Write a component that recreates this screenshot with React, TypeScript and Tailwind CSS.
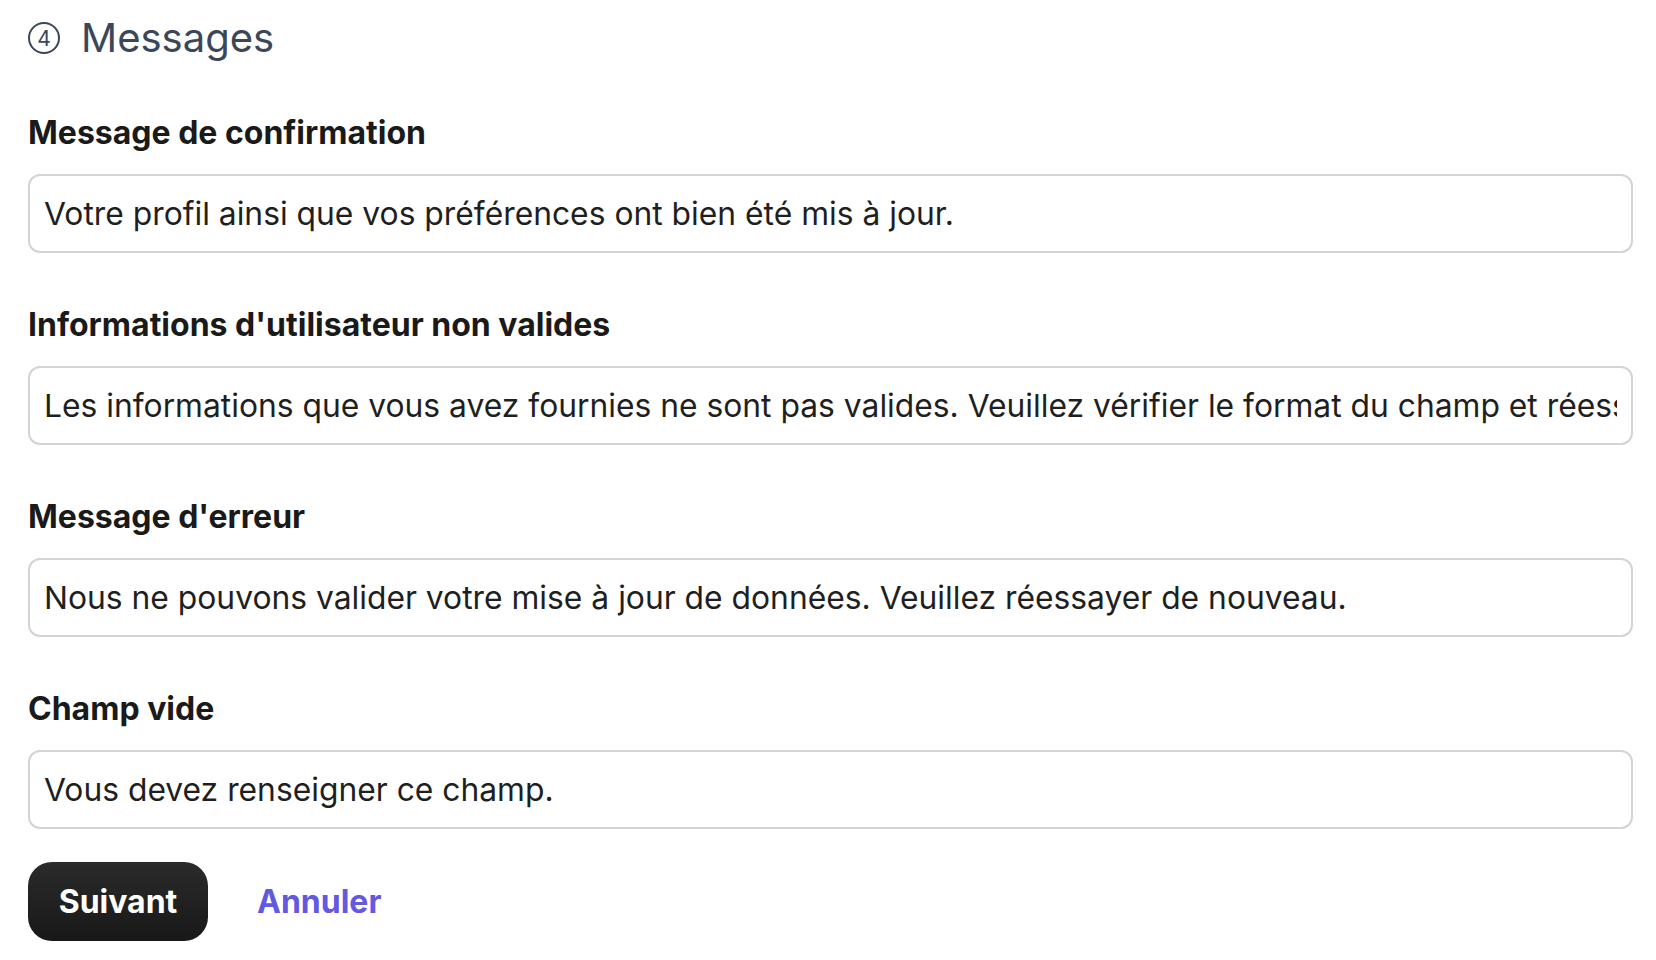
import React from "react";

const fields = [
  { label: "Message de confirmation", value: "Votre profil ainsi que vos préférences ont bien été mis à jour." },
  { label: "Informations d'utilisateur non valides", value: "Les informations que vous avez fournies ne sont pas valides. Veuillez vérifier le format du champ et réessayer." },
  { label: "Message d'erreur", value: "Nous ne pouvons valider votre mise à jour de données. Veuillez réessayer de nouveau." },
  { label: "Champ vide", value: "Vous devez renseigner ce champ." },
];

export default function App() {
  return (
    <div
      className="w-[1656px] h-[960px] bg-white pl-[28px] pr-[23px] pt-[18px] overflow-hidden"
      style={{ fontFamily: "Inter, 'Noto Sans', sans-serif" }}
    >
      <div className="flex items-center h-[40px] text-[#3b4758]">
        <span className="w-[32px] h-[32px] rounded-full border-2 border-[#3b4758] flex items-center justify-center text-[21px] leading-none">
          4
        </span>
        <span className="ml-[21px] text-[40px] leading-[40px]">Messages</span>
      </div>
      <div className="flex flex-col gap-[52px] mt-[55px]">
        {fields.map((f) => (
          <div key={f.label} className="flex flex-col">
            <label className="text-[32px] leading-[40px] font-bold text-[#1a1a1a]">{f.label}</label>
            <input
              readOnly
              defaultValue={f.value}
              className="mt-[21px] h-[79px] w-full rounded-[12px] border-2 border-[#d4d4d4] bg-white px-[14px] text-[31.8px] text-[#1f1f1f] outline-none"
            />
          </div>
        ))}
      </div>
      <div className="flex items-center mt-[33px]">
        <button className="w-[180px] h-[79px] rounded-[24px] bg-gradient-to-b from-[#2b2b2b] to-[#181818] text-white text-[32px] font-bold">
          Suivant
        </button>
        <button className="ml-[49px] text-[32px] font-bold text-[#6358e0]">Annuler</button>
      </div>
    </div>
  );
}
